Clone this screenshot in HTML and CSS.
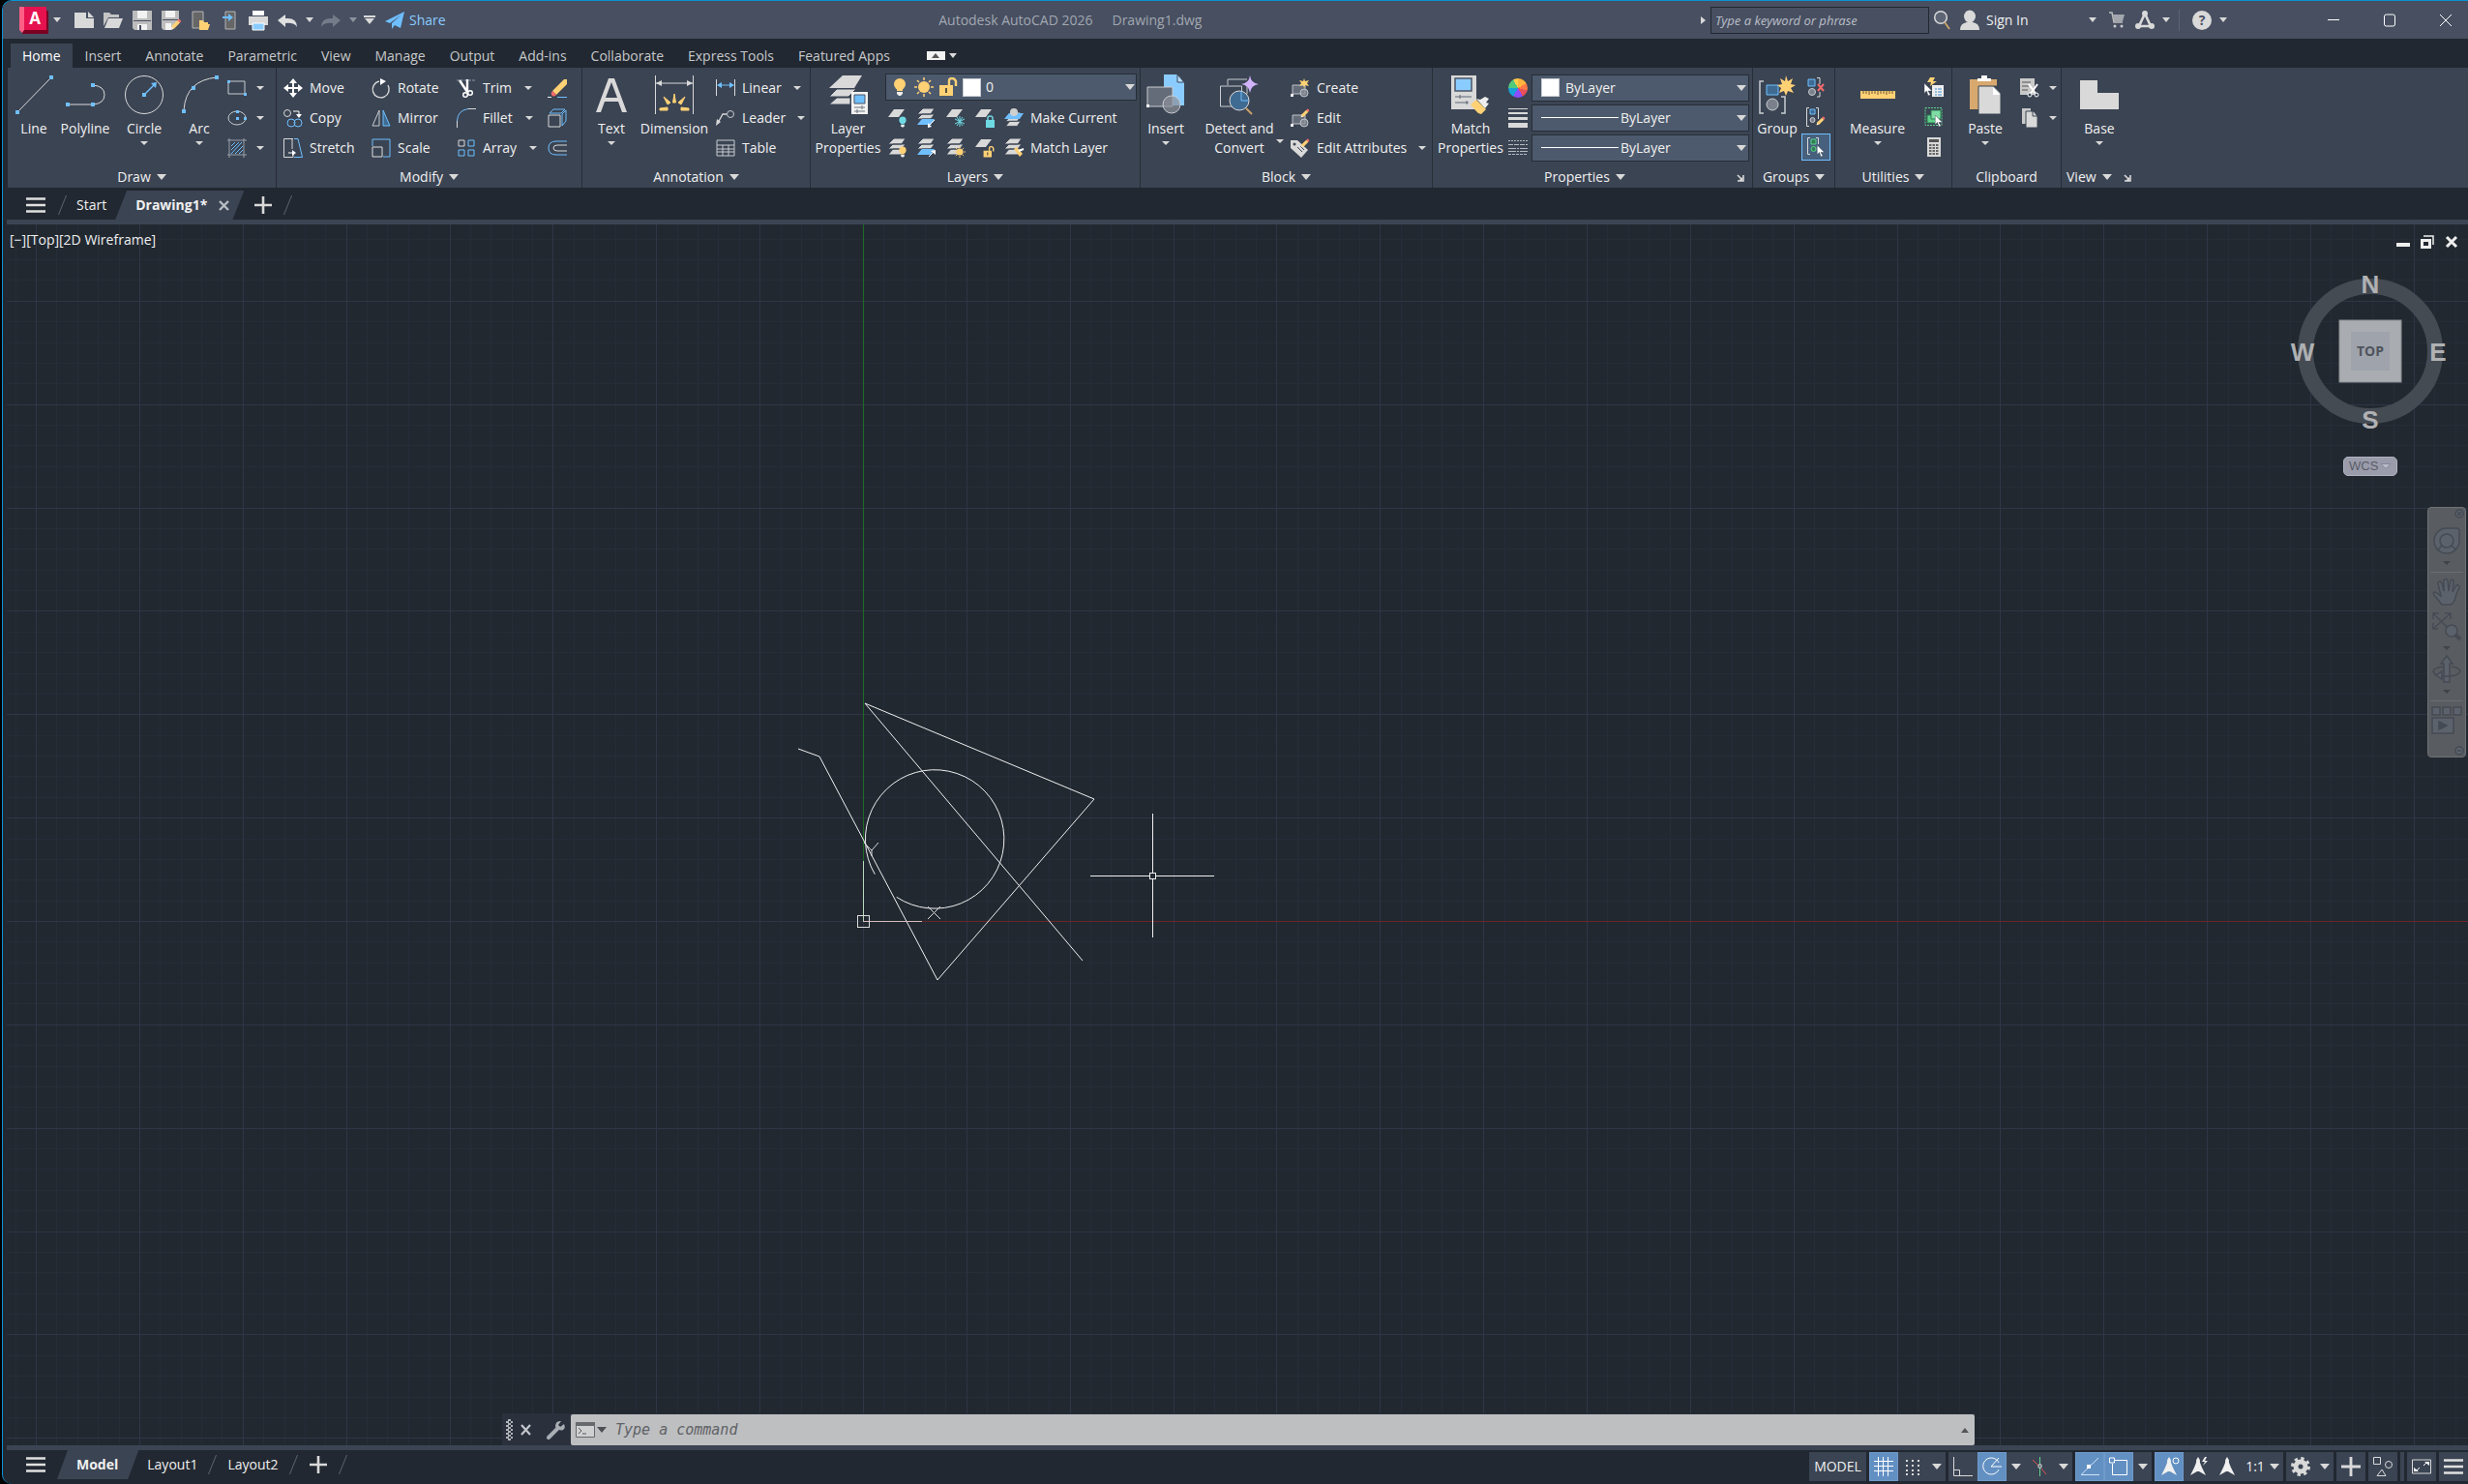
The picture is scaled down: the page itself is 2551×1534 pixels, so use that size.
FILE: index.html
```html
<!DOCTYPE html>
<html lang="en">
<head>
    <meta charset="UTF-8">
    <meta name="viewport" content="width=device-width, initial-scale=1.0">
    <title>Autodesk AutoCAD 2026 - Drawing1.dwg</title>
    <link rel="stylesheet" href="styles.css">
</head>
<body>
    <!-- shared icons -->
    <svg class="sprite" aria-hidden="true">
        <symbol id="layers" viewBox="0 0 20 20">
            <path d="M6 0h12l-4 6H0zM5 6h13l-4 5H0zM5 11h13l-4 6H0z" fill="#d9d9d9" stroke="#3b4453"/>
        </symbol>
        <symbol id="layer" viewBox="0 0 20 20"><path d="M6 1h11l-6 8H0z" fill="#d9d9d9"/></symbol>
        <symbol id="bulb" viewBox="0 0 20 20">
            <circle cx="10" cy="7" r="6" fill="currentColor"/><path d="M7 11h6v3H7z" fill="currentColor"/><path d="M7 15h6v2l-2 2H9l-2-2z" fill="#eee"/>
        </symbol>
        <symbol id="sun" viewBox="0 0 20 20">
            <circle cx="10" cy="10" r="6" fill="#ffd175"/><path d="M10 0v3M10 17v3M0 10h3M17 10h3M3 3l2 2M15 15l2 2M3 17l2-2M15 5l2-2" stroke="#ffd175" stroke-width="1.5"/>
        </symbol>
        <symbol id="unlock" viewBox="0 0 20 20">
            <path d="M1 8h14v11H1z" fill="#ffd175"/><path d="M11 8V4q0-3 3-3t4 3v5" fill="none" stroke="#ffd175" stroke-width="2.4"/><path d="M8 11v5" stroke="#5b5040" stroke-width="2"/>
        </symbol>
        <symbol id="pencil" viewBox="0 0 20 20">
            <path d="M3 17l1-5L13 3l4 4-9 9z" fill="#ffd175"/><path d="M13 3l2-2q3 0 4 4l-2 2z" fill="#f26b6b"/><path d="M3 17l1-4 3 3z" fill="#eee"/>
        </symbol>
        <symbol id="shapes" viewBox="0 0 20 20">
            <path d="M2 7h13v9H2z" fill="#656c79" stroke="#bfc3c9"/><circle cx="14" cy="15" r="4" fill="#8b9099" fill-opacity=".7" stroke="#bfc3c9"/><path d="M0 16h3v3H0z" fill="#eee"/>
        </symbol>
        <symbol id="cursor" viewBox="0 0 10 16"><path d="M0 0v13l3-3 2 6 3-1-3-5h5z" fill="#fff" stroke="#3b4453" stroke-width=".6"/></symbol>
        <symbol id="launch" viewBox="0 0 8 8"><path d="M1 1l4 4M7 1v6H1" fill="none" stroke="#d9d9d9" stroke-width="1.6"/><path d="M6 3v4H2z" fill="#d9d9d9"/></symbol>
        <symbol id="menu" viewBox="0 0 20 16"><path d="M0 1.5h20M0 8h20M0 14.5h20" stroke="#e0e0e0" stroke-width="2.4"/></symbol>
        <symbol id="plus" viewBox="0 0 18 18"><path d="M9 0v18M0 9h18" stroke="#d9d9d9" stroke-width="2.6"/></symbol>
        <symbol id="scale-a" viewBox="0 0 20 20"><path d="M10 0q2 2 2 6l2 5 4 8-7-4h-2l-7 4 4-8 2-5q0-4 2-6z" fill="currentColor"/></symbol>
    </svg>

    <div class="app">
        <header class="titlebar">
            <button class="logo" aria-label="Application menu">
                <svg width="31" height="28" viewBox="0 0 31 28"><path d="M3 4h27v24H3z" fill="#7a0022"/><path d="M0 0h5v24l-2 3-3-3z" fill="#ff5f86"/><path d="M5 0h23v24H5z" fill="#e5124f"/><text x="16" y="18" text-anchor="middle" class="logo-letter">A</text></svg>
                <i class="tri"></i>
            </button>
            <div class="quick">
                <button class="icon-btn" aria-label="New"><svg viewBox="0 0 20 20"><path d="M0 2h12v6h8v10H0z" fill="#d9d9d9"/><path d="M14 1l6 6h-6z" fill="#d9d9d9"/></svg></button>
                <button class="icon-btn" aria-label="Open"><svg viewBox="0 0 20 20"><path d="M0 2h6l2 2h8v3H5L0 16z" fill="#c4c4c4"/><path d="M5 8h15l-4 10H1z" fill="#d9d9d9"/></svg></button>
                <button class="icon-btn" aria-label="Save"><svg viewBox="0 0 20 20"><path d="M0 0h20v20H2l-2-2z" fill="#bdbdbd"/><path d="M5 0h10v8H5z" fill="#f2f2f2"/><path d="M5 14h10v6H5z" fill="#f2f2f2"/><path d="M7 15h2v5H7z" fill="#474f61"/><path d="M1 10.500h18" stroke="#474f61"/></svg></button>
                <button class="icon-btn" aria-label="Save as"><svg viewBox="0 0 20 20"><path d="M0 0h18v12l-7 8H2l-2-2z" fill="#bdbdbd"/><path d="M4 0h10v7H4z" fill="#f2f2f2"/><path d="M4 13h6v7H4z" fill="#f2f2f2"/><path d="M1 9.500h16" stroke="#474f61"/><use href="#pencil" x="8" y="8" width="13" height="13"/></svg></button>
                <button class="icon-btn" aria-label="Open from mobile"><svg viewBox="0 0 20 20"><path d="M2 1h11v17H2z" fill="#666" stroke="#b5b5b5"/><path d="M9 10h4l1 2h4v2h2l-2 6H9z" fill="#ffd175"/></svg></button>
                <button class="icon-btn" aria-label="Save to mobile"><svg viewBox="0 0 20 20"><path d="M6 1h10v18H6z" fill="#666" stroke="#b5b5b5"/><path d="M3 7h8" stroke="#6fbfff" stroke-width="2"/><path d="M9 3l5 4-5 4z" fill="#6fbfff"/></svg></button>
                <button class="icon-btn" aria-label="Plot"><svg viewBox="0 0 20 20"><path d="M4 0h12v5H4z" fill="#fff"/><path d="M0 6h20v9H0z" fill="#d9d9d9"/><path d="M4 13h12v7H4z" fill="#8accff" stroke="#fff"/></svg></button>
                <button class="icon-btn" aria-label="Undo"><svg viewBox="0 0 20 20"><path d="M0 10l8-6v4q12-1 12 9-3-5-12-4v4z" fill="#e0e0e0"/></svg></button>
                <button class="drop-btn" aria-label="Undo list"><i class="tri"></i></button>
                <button class="icon-btn" aria-label="Redo"><svg viewBox="0 0 20 20"><path d="M20 10l-8-6v4Q0 7 0 17q3-5 12-4v4z" fill="#757c89"/></svg></button>
                <button class="drop-btn" aria-label="Redo list"><i class="tri dim"></i></button>
                <button class="customize" aria-label="Customize toolbar"><i class="tri lg"></i></button>
            </div>
            <button class="share"><svg width="20" height="18" viewBox="0 0 20 18"><path d="M0 10L20 0l-4 17-6-3-3 4v-6L17 3 5 12z" fill="#6fbfff"/></svg>Share</button>
            <div class="doc-title"><span>Autodesk AutoCAD 2026</span><span>Drawing1.dwg</span></div>
            <button class="expand" aria-label="Expand search"><i class="tri right"></i></button>
            <input class="search" type="text" aria-label="Search" placeholder="Type a keyword or phrase">
            <button class="search-btn" aria-label="Search"><svg width="18" height="20" viewBox="0 0 18 20"><circle cx="8" cy="7" r="6.300" fill="#5d6575" stroke="#d9d9d9" stroke-width="1.500"/><path d="M12 12l5 7" stroke="#c9a06a" stroke-width="2"/></svg></button>
            <button class="account"><svg width="20" height="20" viewBox="0 0 20 20"><ellipse cx="10" cy="6" rx="6" ry="6.500" fill="#d9d9d9"/><path d="M0 20q0-7 7-8h6q7 1 7 8z" fill="#d9d9d9"/></svg><span>Sign In</span><i class="tri"></i></button>
            <button class="tool-btn" aria-label="Store"><svg width="16" height="17" viewBox="0 0 16 17"><path d="M0 1h3l2 10h9" fill="none" stroke="#bdbdbd" stroke-width="1.500"/><path d="M4 3h12l-2 7H5z" fill="#a2a6ad"/><circle cx="6" cy="15" r="1.500" fill="#ccc"/><circle cx="13" cy="15" r="1.500" fill="#ccc"/></svg></button>
            <button class="tool-btn" aria-label="Apps"><svg width="20" height="20" viewBox="0 0 20 20"><path d="M10 3L4 16h12z" fill="none" stroke="#d9d9d9" stroke-width="2.600"/><circle cx="10" cy="3" r="3" fill="#d9d9d9"/><circle cx="3" cy="16" r="3" fill="#d9d9d9"/><circle cx="17" cy="16" r="3" fill="#d9d9d9"/></svg></button>
            <button class="drop-btn" aria-label="Apps list"><i class="tri"></i></button>
            <span class="divider"></span>
            <button class="tool-btn" aria-label="Help"><svg width="20" height="20" viewBox="0 0 20 20"><circle cx="10" cy="10" r="10" fill="#d9d9d9"/><text x="10" y="15" text-anchor="middle" class="help-mark">?</text></svg></button>
            <button class="drop-btn" aria-label="Help list"><i class="tri"></i></button>
            <div class="window-btns">
                <button aria-label="Minimize"><svg viewBox="0 0 12 14"><path d="M0 6.500h12" stroke="#fff"/></svg></button>
                <button aria-label="Maximize"><svg viewBox="0 0 12 14"><rect x=".5" y="1" width="11" height="12" rx="2" fill="none" stroke="#fff"/></svg></button>
                <button aria-label="Close"><svg viewBox="0 0 12 14"><path d="M0 1l12 12M12 1L0 13" stroke="#fff"/></svg></button>
            </div>
        </header>

        <nav class="ribbon-tabs">
            <button class="active">Home</button>
            <button>Insert</button>
            <button>Annotate</button>
            <button>Parametric</button>
            <button>View</button>
            <button>Manage</button>
            <button>Output</button>
            <button>Add-ins</button>
            <button>Collaborate</button>
            <button>Express Tools</button>
            <button>Featured Apps</button>
            <button class="ribbon-toggle" aria-label="Minimize ribbon"><span class="pill"><i class="tri up"></i></span><i class="tri"></i></button>
        </nav>

        <div class="ribbon">
            <section class="panel draw">
                <div class="panel-body">
                    <button class="big"><svg viewBox="0 0 40 40"><path d="M3 38L38 2" stroke="#d9d9d9"/><path d="M1 36h4v4H1zM36 0h4v4h-4z" fill="#6fbfff"/></svg>Line</button>
                    <button class="big"><svg viewBox="0 0 40 40"><path d="M2 30h26q12-1 12-10T28 10" fill="none" stroke="#d9d9d9"/><path d="M0 28h4v4H0zM26 28h4v4h-4zM26 8h4v4h-4z" fill="#6fbfff"/></svg>Polyline</button>
                    <button class="big"><svg viewBox="0 0 40 40"><circle cx="20" cy="20" r="19.500" fill="none" stroke="#d9d9d9"/><path d="M20 20l10-10" stroke="#6fbfff" stroke-width="1.500"/><path d="M18 18h4v4h-4zM27 8l6-1-1 6z" fill="#6fbfff"/></svg>Circle<i class="tri sm"></i></button>
                    <button class="big"><svg viewBox="0 0 40 40"><path d="M4 36Q6 5 38 2" fill="none" stroke="#d9d9d9"/><path d="M2 35h4v4H2zM12 11h4v4h-4zM36 0h4v4h-4z" fill="#6fbfff"/></svg>Arc<i class="tri sm"></i></button>
                    <div class="stack flyouts">
                        <button aria-label="Rectangle"><svg viewBox="0 0 20 20"><path d="M1 3h17v13H1z" fill="none" stroke="#c9ccd1"/><path d="M0 2h3v3H0zM17 15h3v3h-3z" fill="#6fbfff"/></svg><i class="tri sm"></i></button>
                        <button aria-label="Ellipse"><svg viewBox="0 0 20 20"><ellipse cx="10" cy="10" rx="9" ry="7" fill="none" stroke="#c9ccd1"/><path d="M9 9h3v3H9zM9 2h3v3H9zM17 9h3v3h-3z" fill="#6fbfff"/></svg><i class="tri sm"></i></button>
                        <button aria-label="Hatch"><svg viewBox="0 0 20 20"><path d="M2 0v20M17 0v20M0 2h20M0 17h20" stroke="#9aa0aa"/><path d="M4 8l4-4M4 12l8-8M4 16L15 4M8 16l8-8M12 16l4-4" stroke="#6fbfff"/></svg><i class="tri sm"></i></button>
                    </div>
                </div>
                <button class="panel-title">Draw<i class="tri lg"></i></button>
            </section>

            <section class="panel modify">
                <div class="panel-body">
                    <div class="stack">
                        <button><svg viewBox="0 0 20 20"><path d="M10 2v16M2 10h16" stroke="#fff" stroke-width="2"/><path d="M10 0l4 5H6zM10 20l4-5H6zM0 10l5-4v8zM20 10l-5-4v8z" fill="#fff"/></svg>Move</button>
                        <button><svg viewBox="0 0 20 20"><circle cx="4" cy="5" r="3.500" fill="none" stroke="#d9d9d9"/><path d="M10 3h6v3" fill="none" stroke="#fff"/><path d="M13 6h6l-3 4z" fill="#fff"/><circle cx="8" cy="15" r="4" fill="none" stroke="#6fbfff"/><circle cx="15" cy="15" r="4" fill="none" stroke="#6fbfff"/></svg>Copy</button>
                        <button><svg viewBox="0 0 20 20"><path d="M10 .5H.5v19H10V16M9 1v10" fill="none" stroke="#d9d9d9"/><path d="M11 .5h4l4.500 19H11" fill="none" stroke="#6fbfff"/><path d="M5 15h5" stroke="#fff"/><path d="M9 12l4 3-4 3z" fill="#fff"/></svg>Stretch</button>
                    </div>
                    <div class="stack">
                        <button><svg viewBox="0 0 20 20"><path d="M8 3a8.500 8.500 0 1 0 9 4" fill="none" stroke="#d9d9d9" stroke-width="1.400"/><path d="M9 0l6 3-6 4z" fill="#fff"/></svg>Rotate</button>
                        <button><svg viewBox="0 0 20 20"><path d="M8 2v16H1z" fill="none" stroke="#c9ccd1"/><path d="M12 2v16h7z" fill="#3f6b92" stroke="#6fbfff"/></svg>Mirror</button>
                        <button><svg viewBox="0 0 20 20"><path d="M1 8V1h18v18h-7" fill="none" stroke="#6fbfff"/><path d="M1 9h10v10H1z" fill="none" stroke="#e0e0e0"/></svg>Scale</button>
                    </div>
                    <div class="stack">
                        <button><svg viewBox="0 0 20 20"><path d="M0 2h20" stroke="#8e96a3" stroke-dasharray="3 1"/><path d="M3 2l8 12M11 1v13" stroke="#fff" stroke-width="2.400"/><circle cx="9" cy="17" r="2.300" fill="none" stroke="#fff" stroke-width="1.500"/><circle cx="14" cy="15" r="2.300" fill="none" stroke="#fff" stroke-width="1.500"/></svg>Trim<i class="tri sm"></i></button>
                        <button><svg viewBox="0 0 20 20"><path d="M.5 20v-7" stroke="#d9d9d9"/><path d="M.5 13Q1 2 12 .5" fill="none" stroke="#6fbfff"/><path d="M12 .5h8" stroke="#d9d9d9"/></svg>Fillet<i class="tri sm"></i></button>
                        <button><svg viewBox="0 0 20 20"><path d="M2 2h6v6H2z" fill="none" stroke="#d9d9d9"/><path d="M12 2h6v6h-6zM2 12h6v6H2zM12 12h6v6h-6z" fill="none" stroke="#6fbfff"/></svg>Array<i class="tri sm"></i></button>
                    </div>
                    <div class="stack">
                        <button aria-label="Erase"><svg viewBox="0 0 20 20"><path d="M5 13L17 1h3v5L9 17z" fill="#ffd175"/><path d="M5 13l4 4q-3 3-5 0-1-2 1-4z" fill="#f26b6b"/><path d="M0 19.500h4" stroke="#eee"/><path d="M10 19.500h10" stroke="#6fbfff"/></svg></button>
                        <button aria-label="Explode"><svg viewBox="0 0 20 20"><path d="M1 7h12v12H1z" fill="none" stroke="#d9d9d9"/><path d="M2 5l4-4h12l-4 4zM15 6l4-4v11l-4 5z" fill="none" stroke="#6fbfff"/></svg></button>
                        <button aria-label="Offset"><svg viewBox="0 0 20 20"><path d="M20 3H9Q1 3 1 10t8 7h11" fill="none" stroke="#6fbfff"/><path d="M20 7H10q-4 0-4 3t4 3h10" fill="none" stroke="#d9d9d9"/></svg></button>
                    </div>
                </div>
                <button class="panel-title">Modify<i class="tri lg"></i></button>
            </section>

            <section class="panel annotation">
                <div class="panel-body">
                    <button class="big"><svg viewBox="0 0 40 40"><path d="M4 38L17 3h6l13 35h-5l-4-11H13L9 38zM14 23h12L20 7z" fill="#d9d9d9"/></svg>Text<i class="tri sm"></i></button>
                    <button class="big"><svg viewBox="0 0 40 40"><path d="M.5 0v40M39.500 0v40M1 8h38" stroke="#d9d9d9"/><path d="M1 8l6-3v6zM39 8l-6-3v6z" fill="#d9d9d9"/><path d="M20 19l1.500 9h-3zM9 22l7 6-3 2zM31 22l-7 6 3 2zM5 34l8-1v3H5zM35 34l-8-1v3h8z" fill="#ffd175" stroke="#ffd175"/></svg>Dimension</button>
                    <div class="stack">
                        <button><svg viewBox="0 0 20 20"><path d="M.5 1v17M19.500 1v17" stroke="#d9d9d9"/><path d="M2 7h16" stroke="#6fbfff"/><path d="M1 7l5-3v6zM19 7l-5-3v6z" fill="#6fbfff"/></svg>Linear<i class="tri sm"></i></button>
                        <button><svg viewBox="0 0 20 20"><path d="M2 15L7 6h4" fill="none" stroke="#d9d9d9" stroke-width="1.300"/><circle cx="15" cy="6" r="3.500" fill="none" stroke="#c9ccd1"/><path d="M0 18l1-7 4 3z" fill="#d9d9d9"/></svg>Leader<i class="tri sm"></i></button>
                        <button><svg viewBox="0 0 20 20"><path d="M1 2h18v16H1zM1 7h18M1 11h18M1 14h18M7 7v11M13 7v11" fill="none" stroke="#c9ccd1"/></svg>Table</button>
                    </div>
                </div>
                <button class="panel-title">Annotation<i class="tri lg"></i></button>
            </section>

            <section class="panel layer-panel">
                <div class="panel-body">
                    <button class="big"><svg viewBox="0 0 40 40"><path d="M14 0h20l-8 13H0z" fill="#d9d9d9"/><path d="M8 14h20l-8 8H0zM8 23h14v7H0z" fill="#d9d9d9" stroke="#3b4453"/><path d="M23 17h17v23H23z" fill="#f2f2f2"/><path d="M26 20h11v9H26z" fill="#6fbfff" stroke="#4c5463"/><path d="M26 33h11M26 37h11M34 31v4M29 35v4" stroke="#6d7480"/></svg>Layer<br>Properties</button>
                    <div class="layer-tools">
                        <label class="combo layer-combo">
                            <svg class="gold" viewBox="0 0 20 20"><use href="#bulb"/></svg>
                            <svg viewBox="0 0 20 20"><use href="#sun"/></svg>
                            <svg viewBox="0 0 20 20"><use href="#unlock"/></svg>
                            <span class="swatch"></span>
                            <select aria-label="Layer"><option>0</option></select>
                            <i class="tri lg"></i>
                        </label>
                        <div class="tool-row">
                            <button aria-label="Off"><svg class="teal" viewBox="0 0 20 20"><use href="#layer"/><use href="#bulb" x="9" y="8" width="12" height="12"/></svg></button>
                            <button aria-label="Isolate"><svg viewBox="0 0 20 20"><use href="#layers"/><path d="M5 11h13l-4 6H0z" fill="#6fbfff"/><path d="M18 12l-5 5" stroke="#fff"/><path d="M11 20v-5l4 4z" fill="#fff"/></svg></button>
                            <button aria-label="Freeze"><svg viewBox="0 0 20 20"><use href="#layer"/><path d="M14 8v11M9 11l10 5M9 16l10-5M11 9l6 9M17 9l-6 9" stroke="#6fd9e3"/></svg></button>
                            <button aria-label="Lock"><svg viewBox="0 0 20 20"><use href="#layer"/><path d="M11 12h9v8h-9z" fill="#6fd9e3"/><path d="M13 12v-2q0-2 2.500-2t2.500 2v2" fill="none" stroke="#6fd9e3" stroke-width="1.500"/></svg></button>
                            <button class="wide"><svg viewBox="0 0 20 20"><use href="#layers" y="4" height="17" width="20"/><path d="M5 5h15l-4 6H0z" fill="#6fbfff"/><circle cx="10" cy="4" r="4" fill="#d0d0d0"/></svg>Make Current</button>
                        </div>
                        <div class="tool-row">
                            <button aria-label="Turn all on"><svg class="gold" viewBox="0 0 20 20"><use href="#layers"/><use href="#bulb" x="9" y="8" width="12" height="12"/></svg></button>
                            <button aria-label="Unisolate"><svg viewBox="0 0 20 20"><use href="#layers"/><path d="M5 11h13l-4 6H0z" fill="#6fbfff"/><path d="M12 19l5-5" stroke="#fff"/><path d="M19 12v5l-5-4z" fill="#fff"/></svg></button>
                            <button aria-label="Thaw all"><svg viewBox="0 0 20 20"><use href="#layers"/><use href="#sun" x="8" y="8" width="12" height="12"/></svg></button>
                            <button aria-label="Unlock"><svg viewBox="0 0 20 20"><use href="#layer"/><use href="#unlock" x="8" y="8" width="12" height="12"/></svg></button>
                            <button class="wide"><svg viewBox="0 0 20 20"><use href="#layers"/><path d="M10 11l3-2 6 7-3 3z" fill="#ffd175"/><path d="M15 13l5-2" stroke="#fff" stroke-width="2"/></svg>Match Layer</button>
                        </div>
                    </div>
                </div>
                <button class="panel-title">Layers<i class="tri lg"></i></button>
            </section>

            <section class="panel block">
                <div class="panel-body">
                    <button class="big"><svg viewBox="0 0 40 40"><path d="M18-1h14l7 8v24H18z" fill="#8accff"/><path d="M32-1l7 8h-7z" fill="#b8dfff" stroke="#3b4453"/><path d="M1 12h26v20H1z" fill="#656c79" stroke="#c9ccd1"/><circle cx="26" cy="30" r="9" fill="#8b9099" fill-opacity=".7" stroke="#c9ccd1"/><path d="M0 30h3v3H0z" fill="#fff"/></svg>Insert<i class="tri sm"></i></button>
                    <button class="big detect"><svg viewBox="0 0 40 40"><path d="M8 10V4h20M.5 11h22v21H.5zM28 11v8" fill="none" stroke="#c9ccd1"/><circle cx="20" cy="26" r="10" fill="#3f6b92" stroke="#d9d9d9"/><path d="M22 16v10h8" fill="none" stroke="#6fbfff"/><path d="M27 34l6 6" stroke="#c9a06a" stroke-width="2"/><path d="M31 0q1 8 9 9-8 1-9 9-1-8-9-9 8-1 9-9z" fill="#d0b3fa"/></svg>Detect and<br>Convert<i class="tri sm"></i></button>
                    <div class="stack">
                        <button><svg viewBox="0 0 20 20"><use href="#shapes"/><path d="M14 0l1 3 4-1-2 3 2 3-4-1-1 3-1-3-4 1 2-3-2-3 4 1z" fill="#ffd175"/></svg>Create</button>
                        <button><svg viewBox="0 0 20 20"><use href="#shapes"/><use href="#pencil" x="9" width="11" height="11"/></svg>Edit</button>
                        <button><svg viewBox="0 0 20 20"><path d="M0 2h7l11 10-7 8L0 10z" fill="#d9d9d9"/><circle cx="4" cy="6" r="1.500" fill="#3b4453"/><path d="M7 9l5 5M10 8l4 4" stroke="#3b4453"/><use href="#pencil" x="9" width="11" height="11"/></svg>Edit Attributes<i class="tri sm"></i></button>
                    </div>
                </div>
                <button class="panel-title">Block<i class="tri lg"></i></button>
            </section>

            <section class="panel properties">
                <div class="panel-body">
                    <button class="big"><svg viewBox="0 0 40 40"><path d="M0 0h26v35H0z" fill="#d9d9d9"/><path d="M4 3h17v13H4z" fill="#8accff" stroke="#4c5463" stroke-width="1.500"/><path d="M4 22h17M4 28h14M9 20v4M16 26v4" stroke="#5f6673"/><path d="M20 30l6-5 10 10-5 5q-4-1-6-4z" fill="#ffd175"/><path d="M26 24l4 1 5-3 4 2-3 4 3 1-4 5z" fill="#eee"/></svg>Match<br>Properties</button>
                    <div class="prop-list">
                        <label><span class="wheel"></span><span class="combo"><span class="swatch"></span><select aria-label="Object color"><option>ByLayer</option></select><i class="tri lg"></i></span></label>
                        <label><svg viewBox="0 0 20 20"><path d="M0 .5h20" stroke="#d9d9d9"/><path d="M0 5h20" stroke="#d9d9d9" stroke-width="2"/><path d="M0 10.500h20" stroke="#d9d9d9" stroke-width="3"/><path d="M0 17.500h20" stroke="#d9d9d9" stroke-width="5"/></svg><span class="combo"><span class="line-sample"></span><select aria-label="Lineweight"><option>ByLayer</option></select><i class="tri lg"></i></span></label>
                        <label><svg viewBox="0 0 20 20"><path d="M0 2.500h20" stroke="#b5b9c0" stroke-dasharray="2 1"/><path d="M0 6.500h20" stroke="#b5b9c0" stroke-dasharray="5 1"/><path d="M0 10.500h20M0 13.500h20" stroke="#b5b9c0" stroke-dasharray="8 1 2 1"/><path d="M0 16.500h20" stroke="#b5b9c0" stroke-dasharray="3 1"/></svg><span class="combo"><span class="line-sample"></span><select aria-label="Linetype"><option>ByLayer</option></select><i class="tri lg"></i></span></label>
                    </div>
                </div>
                <div class="panel-foot"><button class="panel-title">Properties<i class="tri lg"></i></button><button class="launcher" aria-label="Properties palette"><svg width="8" height="8"><use href="#launch"/></svg></button></div>
            </section>

            <section class="panel groups">
                <div class="panel-body">
                    <button class="big"><svg viewBox="0 0 40 40"><path d="M6 6H2v33h4M24 22h4v17h-4" fill="none" stroke="#c9ccd1" stroke-width="1.500"/><path d="M9 10h12v10H9z" fill="#3f6b92" stroke="#6fbfff"/><circle cx="15" cy="30" r="6" fill="#7b818c" stroke="#c9ccd1"/><path d="M29 0l2 6 5-3-2 6 5 1-5 3 3 5-6-2-2 5-2-5-5 2 2-5-4-3 5-1-2-6 5 3z" fill="#ffd175"/></svg>Group</button>
                    <div class="stack squares">
                        <button aria-label="Ungroup"><svg viewBox="0 0 20 20"><path d="M2 2h7v7H2z" fill="#3f6b92" stroke="#6fbfff"/><circle cx="6" cy="15" r="3.500" fill="#7b818c" stroke="#c9ccd1"/><path d="M11 .5h3V7M14 15v5h-3" fill="none" stroke="#d9d9d9"/><path d="M12 7l6 7M18 7l-6 7" stroke="#f26b6b" stroke-width="2"/></svg></button>
                        <button aria-label="Group edit"><svg viewBox="0 0 20 20"><path d="M3 .5H.5v19H3M10 .5h2.500V12" fill="none" stroke="#d9d9d9"/><path d="M4 2h5v5H4z" fill="#3f6b92" stroke="#6fbfff"/><circle cx="6.500" cy="13" r="2.500" fill="#7b818c" stroke="#c9ccd1"/><use href="#pencil" x="9" y="9" width="11" height="11"/></svg></button>
                        <button class="on" aria-label="Group selection"><svg viewBox="0 0 20 20"><path d="M4 .5H1.500v17H4M10 .5h2.500V7" fill="none" stroke="#d9d9d9"/><path d="M5 2h5v5H5z" fill="#2f7d57" stroke="#5fd08a"/><circle cx="7.500" cy="12" r="2.500" fill="#2f7d57" stroke="#5fd08a"/><use href="#cursor" x="11" y="8" width="8" height="12"/></svg></button>
                    </div>
                </div>
                <button class="panel-title">Groups<i class="tri lg"></i></button>
            </section>

            <section class="panel utilities">
                <div class="panel-body">
                    <button class="big"><svg viewBox="0 0 40 40"><path d="M2 16h36v8H2z" fill="#ffd175"/><path d="M5 16v3M8 16v3M11 16v4M14 16v3M17 16v3M20 16v4M23 16v3M26 16v3M29 16v4M32 16v3M35 16v3" stroke="#6b5a35"/></svg>Measure<i class="tri sm"></i></button>
                    <div class="stack squares">
                        <button aria-label="Quick select"><svg viewBox="0 0 20 20"><path d="M8 8h12v12H8z" fill="#eee"/><path d="M11 12h2M14 12h4M11 15h2M14 15h4M11 18h2M14 18h4" stroke="#3f8fd0"/><path d="M6 0h5L9 4h4L6 9l1-4H3z" fill="#ffd175"/><use href="#cursor" x="0" y="6" width="8" height="13"/></svg></button>
                        <button aria-label="Select all"><svg viewBox="0 0 20 20"><path d="M1 .5h17v18H1z" fill="none" stroke="#5fd08a" stroke-dasharray="2 1"/><path d="M3 8h10v8H3z" fill="#5fd08a" stroke="#2f7d57"/><path d="M7 3h10v9H7z" fill="#7fdca3" stroke="#2f7d57"/><use href="#cursor" x="11" y="8" width="8" height="12"/></svg></button>
                        <button aria-label="Calculator"><svg viewBox="0 0 20 20"><path d="M3 0h14v20H3z" fill="#d9d9d9"/><path d="M5 2h10v3H5z" fill="#555"/><path d="M5 8h10M5 11h10M5 14h10M5 17h10" stroke="#666" stroke-width="2" stroke-dasharray="2.500 1"/></svg></button>
                    </div>
                </div>
                <button class="panel-title">Utilities<i class="tri lg"></i></button>
            </section>

            <section class="panel clipboard">
                <div class="panel-body">
                    <button class="big"><svg viewBox="0 0 40 40"><path d="M4 4h28v31H4z" fill="#d8a96f"/><path d="M12 6V3h4V0h6v3h4v3z" fill="#fff"/><path d="M13 11h23v29H13z" fill="#d9d9d9" stroke="#3b4453"/><path d="M28 11h9v9z" fill="#3b4453"/><path d="M28 12v8h7z" fill="#fff"/></svg>Paste<i class="tri sm"></i></button>
                    <div class="stack flyouts">
                        <button aria-label="Cut"><svg viewBox="0 0 20 20"><path d="M0 0h15v17H0z" fill="#c9c9c9"/><path d="M2 4h9M2 8h7M2 12h6" stroke="#555"/><path d="M9 6l8 11M18 6L10 17" stroke="#fff" stroke-width="2"/><circle cx="10" cy="17" r="2" fill="#3b4453" stroke="#fff"/><circle cx="17" cy="17" r="2" fill="#3b4453" stroke="#fff"/></svg><i class="tri sm"></i></button>
                        <button aria-label="Copy clip"><svg viewBox="0 0 20 20"><path d="M2 0h9v16H2z" fill="#c9c9c9"/><path d="M6 3h8l4 5v12H6z" fill="#d9d9d9" stroke="#3b4453"/><path d="M13 3v5h5" fill="none" stroke="#3b4453"/></svg><i class="tri sm"></i></button>
                    </div>
                </div>
                <span class="panel-title">Clipboard</span>
            </section>

            <section class="panel view">
                <div class="panel-body">
                    <button class="big"><svg viewBox="0 0 40 40"><path d="M0 5h18v13h22v17H0z" fill="#d9d9d9"/></svg>Base<i class="tri sm"></i></button>
                </div>
                <div class="panel-foot"><button class="panel-title">View<i class="tri lg"></i></button><button class="launcher" aria-label="View options"><svg width="8" height="8"><use href="#launch"/></svg></button></div>
            </section>
        </div>

        <nav class="file-tabs">
            <button class="menu-btn" aria-label="Drawing menu"><svg width="20" height="16"><use href="#menu"/></svg></button>
            <i class="slash"></i>
            <button class="file-tab">Start</button>
            <div class="file-tab current"><button>Drawing1*</button><button aria-label="Close tab"><svg width="11" height="11" viewBox="0 0 11 11"><path d="M1 1l9 9M10 1l-9 9" stroke="#b9bdc4" stroke-width="2.400"/></svg></button></div>
            <button class="add-btn" aria-label="New tab"><svg width="18" height="18"><use href="#plus"/></svg></button>
            <i class="slash"></i>
        </nav>

        <main class="viewport">
            <svg class="drawing" id="drawing">
                <path id="minor" class="grid-minor"/>
                <path id="major" class="grid-major"/>
                <!-- world origin -->
                <g transform="translate(885 720)">
                    <path d="M.5 0V-720" stroke="#1d6b25"/>
                    <path d="M0 .5H1700" stroke="#6b2529"/>
                    <g class="entity">
                        <path d="M-67-178l22 8L77 61l162-187L2-225 227 41"/>
                        <path d="M12.300-48.300A71.700 71.700 0 1 1 34.700-24.700"/>
                    </g>
                    <g class="ucs">
                        <path d="M.5 0V-62" stroke="#b9d8bc"/>
                        <path d="M0 .5H61" stroke="#d8bcbc"/>
                        <rect x="-5.500" y="-5.500" width="12" height="12"/>
                        <path d="M9-67v-6l-8-8M9-73l7-8M67-15l13 13M80-15L67-2"/>
                    </g>
                    <g class="crosshair" transform="translate(299 -47)">
                        <path d="M.5-64V-3M.5 4v60M-64 .5H-3M4 .5h60"/>
                        <rect x="-2.500" y="-2.500" width="6" height="6"/>
                    </g>
                </g>
            </svg>

            <div class="view-labels"><button>[−]</button><button>[Top]</button><button>[2D Wireframe]</button></div>

            <div class="view-btns">
                <button aria-label="Minimize drawing"><svg viewBox="0 0 14 14"><path d="M0 8h14v4H0z" fill="#eee"/></svg></button>
                <button aria-label="Restore drawing"><svg viewBox="0 0 14 14"><path d="M1.500 5.500h8v7h-8z" fill="none" stroke="#eee" stroke-width="3"/><path d="M3 1h10v9" fill="none" stroke="#eee" stroke-width="1.500"/></svg></button>
                <button aria-label="Close drawing"><svg viewBox="0 0 14 14"><path d="M2 2l10 10M12 2L2 12" stroke="#eee" stroke-width="3"/></svg></button>
            </div>

            <div class="viewcube">
                <svg width="164" height="164" viewBox="0 0 164 164">
                    <circle cx="82" cy="82" r="67" fill="none" stroke="#454b53" stroke-width="16"/>
                    <rect x="50" y="50" width="64" height="64" fill="#a9adb1" stroke="#8b8f92"/>
                    <rect x="62" y="62" width="40" height="40" fill="#9ea3ac"/>
                    <text x="82" y="87" class="cube-face">TOP</text>
                    <g class="compass"><text x="82" y="22">N</text><text x="82" y="162">S</text><text x="12" y="92">W</text><text x="152" y="92">E</text></g>
                </svg>
                <button class="wcs">WCS<svg width="12" height="6" viewBox="0 0 12 6"><path d="M1 .5h10L6 5.500z" fill="#b9bcc9" stroke="#85889a"/></svg></button>
            </div>

            <div class="navbar">
                <button class="nav-end" aria-label="Close navigation bar"><svg width="10" height="10" viewBox="0 0 10 10"><circle cx="5" cy="5" r="4"/><path d="M3 3l4 4M7 3L3 7"/></svg></button>
                <button aria-label="Steering wheel"><svg width="30" height="30" viewBox="0 0 30 30"><path d="M15 2h10q3 0 3 3v10A13 13 0 1 1 15 2z"/><circle cx="15" cy="15" r="7"/><path d="M10 20l-4 4M20 20l4 4"/></svg></button>
                <i class="tri sm"></i>
                <hr>
                <button aria-label="Pan"><svg width="30" height="30" viewBox="0 0 30 30"><path d="M10 28L2 18q-2-3 1-3l6 4L6 6q1-4 4 0l2 8V3q2-3 4 0l1 11 2-11q3-2 3 1l-1 11 4-7q3-1 3 2l-4 10q-1 6-5 8z"/></svg></button>
                <button aria-label="Zoom extents"><svg width="32" height="30" viewBox="0 0 32 30"><path d="M2 2l16 16M2 18L20 2M2 8V2h6M2 12v6h5M14 2h6v6"/><circle cx="21" cy="20" r="6"/><path d="M25 24l5 5" stroke-width="4"/></svg></button>
                <i class="tri sm"></i>
                <button aria-label="Orbit"><svg width="30" height="30" viewBox="0 0 30 30"><path d="M12 28V9H9l6-8 6 8h-3v19z"/><path d="M11 12Q2 13 1 17q2 6 14 5 12 0 14-5-1-4-9-5" fill="none"/><path d="M4 21l6-4v8z"/></svg></button>
                <i class="tri sm"></i>
                <hr>
                <button aria-label="ShowMotion"><svg width="32" height="30" viewBox="0 0 32 30"><path d="M1 1h8v8H1zM12 1h8v8h-8zM23 1h8v8h-8zM1 12h22v16H1z"/><path d="M8 16v8l8-4z" class="solid"/></svg></button>
                <button class="nav-end" aria-label="Navigation bar options"><svg width="10" height="10" viewBox="0 0 10 10"><circle cx="5" cy="5" r="4"/><path d="M3 5h4"/></svg></button>
            </div>

            <div class="command">
                <span class="grip"></span>
                <button aria-label="Close command line"><svg width="11" height="12" viewBox="0 0 11 12"><path d="M1 1l9 10M10 1L1 11" stroke="#c3c6cb" stroke-width="2.200"/></svg></button>
                <button class="wrench" aria-label="Customize"><svg width="20" height="20" viewBox="0 0 20 20"><path d="M2 18l10-10" stroke="#a9adb4" stroke-width="4" stroke-linecap="round"/><path d="M18 4l-4 3-2-2 3-4q-6-1-6 6 5 5 8 3 3-2 1-6z" fill="#a9adb4"/></svg></button>
                <div class="command-box">
                    <button aria-label="Recent commands"><svg width="20" height="16" viewBox="0 0 20 16"><path d="M.5.500h19v15H.5z" fill="#cfd0d1" stroke="#66696d"/><path d="M0 0h20v4H0z" fill="#66696d"/><path d="M3 6l3 3-3 3M7 12h4" fill="none" stroke="#55585c"/></svg><i class="tri lg"></i></button>
                    <input type="text" aria-label="Command" placeholder="Type a command">
                    <button aria-label="Command history"><i class="tri up"></i></button>
                </div>
            </div>
        </main>

        <footer class="status">
            <button class="menu-btn" aria-label="Layout menu"><svg width="20" height="16"><use href="#menu"/></svg></button>
            <button class="layout-tab current">Model</button>
            <button class="layout-tab">Layout1</button>
            <i class="slash"></i>
            <button class="layout-tab">Layout2</button>
            <i class="slash"></i>
            <button class="add-btn" aria-label="New layout"><svg width="18" height="18"><use href="#plus"/></svg></button>
            <i class="slash"></i>
            <div class="status-tools">
                <div class="group"><button class="model">MODEL</button></div>
                <div class="group">
                    <button class="on" aria-label="Grid"><svg viewBox="0 0 20 20"><path d="M4.500 0v20M9.500 0v20M14.500 0v20M0 4.500h20M0 9.500h20M0 14.500h20" stroke="#fff"/></svg></button>
                    <button aria-label="Snap"><svg viewBox="0 0 20 20"><path d="M3 4h16M3 9h16M3 14h16M3 18h16" stroke="#d9d9d9" stroke-width="2" stroke-dasharray="2 4"/></svg></button>
                    <button class="narrow" aria-label="Snap list"><i class="tri lg"></i></button>
                </div>
                <div class="group">
                    <button aria-label="Ortho"><svg viewBox="0 0 20 20"><path d="M.5 0v19.500H20M.5 13.500h6v6" fill="none" stroke="#d9d9d9"/></svg></button>
                    <button class="on" aria-label="Polar"><svg viewBox="0 0 20 20"><path d="M17 6a8.500 8.500 0 1 0 0 7M9 10L17 1M9 10h11" fill="none" stroke="#fff"/></svg></button>
                    <button class="narrow" aria-label="Polar list"><i class="tri lg"></i></button>
                    <button aria-label="Isometric"><svg viewBox="0 0 20 20"><path d="M3 3l6 6M12 12l5 6" stroke="#e05555"/><path d="M10.500 0v20" stroke="#5fd08a"/><path d="M9 8h3v3H9z" fill="#3b4453" stroke="#ddd"/></svg></button>
                    <button class="narrow" aria-label="Isometric list"><i class="tri lg"></i></button>
                </div>
                <div class="group">
                    <button class="on" aria-label="Object tracking"><svg viewBox="0 0 20 20"><path d="M19 1L1 18.500h19" fill="none" stroke="#cfe4fa"/><path d="M7 8h4v4H7z" fill="#fff"/></svg></button>
                    <button class="on" aria-label="Object snap"><svg viewBox="0 0 20 20"><path d="M6 3.500h12.500v15h-15V7" fill="none" stroke="#fff"/><path d="M.5 1h5v5h-5z" fill="none" stroke="#fff"/></svg></button>
                    <button class="narrow" aria-label="Object snap list"><i class="tri lg"></i></button>
                </div>
                <div class="group">
                    <button class="on" aria-label="Annotation visibility"><svg viewBox="0 0 20 20"><use href="#scale-a"/><circle cx="17" cy="4" r="3" fill="none" stroke="#fff"/></svg></button>
                    <button aria-label="Auto scale"><svg viewBox="0 0 20 20"><use href="#scale-a"/><path d="M17 0l-3 5h3l-2 4 5-5h-3l2-4z" fill="#eee"/></svg></button>
                    <button aria-label="Annotation scale"><svg viewBox="0 0 20 20"><use href="#scale-a"/></svg></button>
                    <button class="ratio">1:1<i class="tri lg"></i></button>
                </div>
                <div class="group">
                    <button aria-label="Workspace"><svg viewBox="0 0 20 20"><circle cx="10" cy="10" r="8" fill="none" stroke="#d9d9d9" stroke-width="4" stroke-dasharray="3.140 3.140"/><circle cx="10" cy="10" r="5" fill="none" stroke="#d9d9d9" stroke-width="5"/></svg></button>
                    <button class="narrow" aria-label="Workspace list"><i class="tri lg"></i></button>
                </div>
                <div class="group"><button aria-label="Annotation monitor"><svg viewBox="0 0 18 18"><use href="#plus"/></svg></button></div>
                <div class="group"><button aria-label="Isolate objects"><svg viewBox="0 0 20 20"><path d="M.5.500h7v7h-7zM9 13l4 6.500H4z" fill="none" stroke="#d9d9d9"/><circle cx="16" cy="8" r="3.500" fill="none" stroke="#d9d9d9"/></svg></button></div>
                <div class="group spacer"></div>
                <div class="group"><button aria-label="Clean screen"><svg viewBox="0 0 20 20"><path d="M.5 3h19v14H.5z" fill="none" stroke="#d9d9d9"/><path d="M12 9l4-4M8 11l-4 4" stroke="#fff"/><path d="M13 5h5v4zM2 15h5l-5-4z" fill="#fff"/></svg></button></div>
                <div class="group"><button aria-label="Customization"><svg viewBox="0 0 20 16"><use href="#menu"/></svg></button></div>
            </div>
        </footer>
    </div>

    <script src="grid.js"></script>
</body>
</html>
```
FILE: styles.css
```css
* {
    box-sizing: border-box;
}
body {
    margin: 0;
    background: #000;
    font-family: "Open Sans", "Noto Sans", sans-serif;
    font-size: 14px;
    line-height: 20px;
    color: #f0f0f0;
}
button, input, select {
    font: inherit;
    color: inherit;
    margin: 0;
    padding: 0;
    border: 0;
    background: none;
}
svg {
    flex: none;
    overflow: visible;
}
.sprite {
    position: absolute;
    width: 0;
    height: 0;
}
.app {
    display: flex;
    flex-direction: column;
    height: 100vh;
    margin-left: 2px;
    border-top: 1px solid #0a93d6;
    border-left: 1px solid #0a93d6;
    border-radius: 10px 0 0 10px;
    background: #222831;
    overflow: hidden;
}

/* small arrows */
.tri {
    flex: none;
    display: block;
    width: 0;
    height: 0;
    border: 4px solid transparent;
    border-top: 5px solid #d9d9d9;
    border-bottom: 0;
}
.tri.sm {
    border-top-width: 4px;
}
.tri.lg {
    border-width: 6px 5px 0;
}
.tri.dim {
    border-top-color: #8d939e;
}
.tri.up {
    border: 4px solid transparent;
    border-bottom: 5px solid #555;
    border-top: 0;
}
.tri.right {
    border: 4px solid transparent;
    border-left: 5px solid #d9d9d9;
    border-right: 0;
}

/* title bar */
.titlebar {
    display: flex;
    align-items: center;
    height: 39px;
    padding-left: 17px;
    background: #474f61;
}
.titlebar button {
    display: flex;
    align-items: center;
    justify-content: center;
}
.titlebar .logo {
    gap: 4px;
    width: 48px;
    justify-content: flex-start;
}
.logo-letter {
    font: bold 17px "Open Sans", sans-serif;
    fill: #fff;
}
.quick {
    display: flex;
    align-items: center;
}
.icon-btn {
    width: 30px;
}
.quick .icon-btn:first-child {
    margin-left: 4px;
}
.icon-btn svg {
    width: 20px;
    height: 20px;
}
.drop-btn {
    width: 15px;
    height: 20px;
}
.titlebar .customize {
    width: 12px;
    height: 10px;
    margin: 0 10px 0 4px;
    border-top: 2px solid #d9d9d9;
}
.titlebar .share {
    gap: 5px;
    color: #8accff;
}
.doc-title {
    flex: 1;
    display: flex;
    justify-content: center;
    gap: 20px;
    color: #a2a7b0;
}
.expand {
    width: 16px;
}
.search {
    width: 226px;
    height: 28px;
    padding: 0 4px;
    border: 1px solid #222831;
    font-family: "Noto Sans", sans-serif;
    font-size: 13px;
    font-style: italic;
}
.search::placeholder {
    color: #b5b9c1;
    opacity: 1;
}
.search-btn {
    width: 26px;
}
.titlebar .account {
    gap: 7px;
    width: 153px;
    padding: 0 6px;
    justify-content: flex-start;
}
.account .tri {
    margin-left: auto;
}
.tool-btn {
    width: 29px;
}
.divider {
    width: 1px;
    height: 22px;
    margin: 0 8px 0 6px;
    background: #5b6477;
}
.help-mark {
    font: bold 14px "Open Sans", sans-serif;
    fill: #474f61;
}
.window-btns {
    display: flex;
    gap: 12px;
    margin-left: 84px;
}
.window-btns button {
    width: 46px;
    height: 30px;
}
.window-btns svg {
    width: 12px;
    height: 14px;
}

/* ribbon tabs */
.ribbon-tabs {
    display: flex;
    align-items: flex-end;
    gap: 1px;
    height: 30px;
    padding-left: 8px;
}
.ribbon-tabs button {
    height: 25px;
    padding: 0 12px;
    color: #c6c8cb;
}
.ribbon-tabs .active {
    background: #3b4453;
    color: #fff;
}
.ribbon-tabs .ribbon-toggle {
    display: flex;
    align-items: center;
    gap: 4px;
    padding-left: 25px;
}
.pill {
    display: flex;
    align-items: center;
    justify-content: center;
    width: 19px;
    height: 9px;
    background: #f2f2f2;
}

/* ribbon */
.ribbon {
    display: flex;
    height: 124px;
    margin-left: 5px;
    background: #3b4453;
}
.panel {
    display: flex;
    flex-direction: column;
    border-right: 1px solid #262d37;
}
.panel-body {
    display: flex;
    height: 101px;
    padding-top: 5px;
}
.panel-title {
    display: flex;
    flex: 1;
    align-items: center;
    justify-content: center;
    gap: 6px;
    height: 23px;
}
.panel-foot {
    display: flex;
    align-items: center;
}
.launcher {
    width: 16px;
    height: 20px;
    text-align: left;
}
.big {
    display: flex;
    flex: none;
    flex-direction: column;
    align-items: center;
    padding-top: 3px;
    white-space: nowrap;
}
.big svg {
    width: 40px;
    height: 40px;
    margin-bottom: 5px;
}
.big .tri {
    margin-top: 3px;
}
.stack {
    display: grid;
    grid-auto-rows: 31px;
    align-content: start;
}
.stack button {
    display: flex;
    align-items: center;
    gap: 7px;
    white-space: nowrap;
}
.stack button .tri {
    margin-left: 5px;
}
.stack svg, .tool-row svg, .combo svg, .prop-list svg {
    width: 20px;
    height: 20px;
}
.flyouts button .tri {
    margin-left: 3px;
}

.draw {
    width: 278px;
}
.draw .panel-body {
    display: grid;
    grid-template-columns: 48px 58px 64px 50px 1fr;
    padding-left: 3px;
}
.draw .stack {
    padding-left: 4px;
}
.modify {
    width: 316px;
}
.modify .panel-body {
    display: grid;
    grid-template-columns: 91px 88px 94px 20px;
    padding-left: 7px;
}
.modify .tri.sm {
    margin-left: 6px;
}
.annotation {
    width: 236px;
}
.annotation .panel-body {
    display: grid;
    grid-template-columns: 44px 86px 1fr;
    padding-left: 8px;
}
.layer-panel {
    width: 341px;
}
.layer-panel .big {
    width: 77px;
}
.block {
    width: 302px;
}
.block .panel-body {
    display: grid;
    grid-template-columns: 52px 100px 1fr;
}
.block .stack {
    padding-left: 3px;
}
.big.detect {
    position: relative;
}
.detect .tri {
    position: absolute;
    right: 4px;
    top: 66px;
}
.properties {
    width: 331px;
}
.properties .big {
    width: 78px;
}
.groups {
    width: 85px;
}
.groups .big {
    width: 50px;
}
.utilities {
    width: 121px;
}
.utilities .big {
    width: 87px;
}
.clipboard {
    width: 113px;
}
.clipboard .big {
    width: 68px;
}
.clipboard .stack {
    padding-left: 2px;
}
.view {
    border-right: 0;
}
.view .big {
    width: 78px;
}
.view .panel-title {
    padding: 0 12px 0 5px;
}
.squares button {
    width: 30px;
    height: 28px;
    margin-top: 1px;
    justify-content: center;
}
.squares .on {
    border: 1px solid #6fbfff;
    background: #46607d;
}

/* combos */
.combo {
    position: relative;
    display: flex;
    align-items: center;
    width: 225px;
    height: 28px;
    padding: 0 2px 0 9px;
    border: 1px solid #262d37;
    background: #4d5a6d;
}
.combo select {
    flex: 1;
    appearance: none;
    outline: 0;
    padding-left: 6px;
}
.swatch {
    width: 19px;
    height: 19px;
    border: 1px solid #c9ccd1;
    background: #fff;
}
.line-sample {
    width: 80px;
    height: 1px;
    background: #fff;
}
.combo .line-sample + select {
    padding-left: 2px;
}
.layer-combo {
    width: 260px;
    margin-top: 1px;
    padding: 0 1px 0 4px;
    gap: 5px;
}
.layer-combo select {
    padding-left: 0;
}
.gold {
    color: #ffd175;
}
.teal {
    color: #6fd9e3;
}
.tool-row {
    display: flex;
    height: 31px;
    padding-left: 3px;
    gap: 10px;
}
.layer-combo + .tool-row {
    margin-top: 2px;
}
.tool-row button {
    display: flex;
    align-items: center;
    gap: 7px;
}
.prop-list label {
    display: flex;
    align-items: center;
    gap: 4px;
    height: 31px;
}
.wheel {
    width: 20px;
    height: 20px;
    border-radius: 50%;
    background: conic-gradient(#ffb53d 0 60deg, #ff7a45 0 105deg, #e8505b 0 150deg, #8a4dff 0 210deg, #18a3d8 0 270deg, #53c97a 0 330deg, #ffcf4a 0);
}

/* drawing tabs */
.file-tabs {
    display: flex;
    align-items: center;
    height: 38px;
    margin-left: 4px;
    padding-top: 3px;
    border-bottom: 5px solid #3b4453;
}
.menu-btn {
    width: 20px;
    height: 20px;
    margin: 0 13px 0 20px;
}
.menu-btn svg, .add-btn svg {
    display: block;
}
.slash {
    width: 1px;
    height: 20px;
    margin: 0 4px;
    background: #5a6473;
    transform: skewX(-22deg);
}
.file-tab {
    padding: 0 9px 0 10px;
}
.file-tab.current {
    display: flex;
    align-items: center;
    gap: 12px;
    height: 30px;
    padding: 0 15px 0 21px;
    background: #3b4453;
    clip-path: polygon(12px 0, 100% 0, calc(100% - 12px) 100%, 0 100%);
    font-weight: bold;
}
.current svg {
    display: block;
}
.add-btn {
    width: 18px;
    height: 18px;
    margin: 0 12px 0 11px;
}

/* drawing area */
.viewport {
    position: relative;
    flex: 1;
    min-height: 0;
    margin-left: 4px;
    background: #212830;
    overflow: hidden;
}
.drawing {
    position: absolute;
    width: 100%;
    height: 100%;
}
.drawing path, .drawing rect {
    fill: none;
}
.grid-minor {
    stroke: #262d38;
}
.grid-major {
    stroke: #2f3646;
}
.entity, .crosshair {
    stroke: #f0f0f0;
}
.ucs {
    stroke: #dcdcdc;
}
.view-labels {
    position: absolute;
    left: 3px;
    top: 6px;
    display: flex;
}
.view-btns {
    position: absolute;
    right: 10px;
    top: 11px;
    display: flex;
    gap: 11px;
}
.view-btns svg {
    display: block;
    width: 14px;
    height: 14px;
}
.viewcube {
    position: absolute;
    top: 49px;
    right: 19px;
    display: flex;
    flex-direction: column;
    align-items: center;
}
.compass {
    font: bold 26px "Liberation Sans", sans-serif;
    text-anchor: middle;
    fill: #b0b1b3;
}
.cube-face {
    font: bold 14px "Open Sans", sans-serif;
    text-anchor: middle;
    fill: #4f545c;
}
.wcs {
    display: flex;
    align-items: center;
    justify-content: space-between;
    width: 56px;
    height: 20px;
    margin-top: 27px;
    padding: 0 5px;
    border: 1px solid #b0b2c0;
    border-radius: 5px;
    background: #9a9cab;
    color: #5a5d68;
    font-family: "Liberation Sans", sans-serif;
    font-size: 13px;
}
.navbar {
    position: absolute;
    top: 292px;
    right: 2px;
    display: flex;
    flex-direction: column;
    align-items: center;
    width: 40px;
    height: 259px;
    border: 1px solid #6d7174;
    border-radius: 4px;
    background: #595d61;
}
.navbar svg {
    display: block;
    fill: #5c626c;
    stroke: #454a53;
    stroke-width: 1.5;
}
.navbar .solid {
    fill: #454a53;
}
.navbar button {
    margin-top: 5px;
}
.navbar .tri {
    margin-top: 6px;
    border-top-color: #3f444c;
}
.navbar hr {
    width: 34px;
    height: 1px;
    margin: 7px 0 0;
    border: 0;
    background: #6a6e72;
}
.navbar .nav-end {
    align-self: flex-end;
    margin: 1px 1px 3px;
}
.navbar .nav-end:last-child {
    margin: auto 1px 1px;
}

/* command line */
.command {
    position: absolute;
    left: 512px;
    bottom: 0;
    right: 510px;
    display: flex;
    align-items: center;
    gap: 8px;
    height: 33px;
    padding-left: 4px;
    background: #2a303c;
}
.grip {
    width: 7px;
    height: 22px;
    background: repeating-conic-gradient(#aeb2b8 0 25%, transparent 0 50%) 0 0 / 5px 4px;
}
.command svg {
    display: block;
}
.wrench {
    margin-left: 8px;
}
.command-box {
    flex: 1;
    display: flex;
    align-items: center;
    height: 32px;
    margin: 1px 0 0 -3px;
    padding: 0 6px 0 5px;
    border-radius: 2px;
    background: #bebfc1;
}
.command-box button {
    display: flex;
    align-items: center;
    gap: 2px;
}
.command-box .tri.lg {
    border-top-color: #4c4f54;
}
.command-box input {
    flex: 1;
    padding-left: 9px;
    font: italic 15px "DejaVu Sans Mono", monospace;
}
.command-box input::placeholder {
    color: #5f6266;
    opacity: 1;
}

/* status bar */
.status {
    display: flex;
    height: 40px;
    margin-left: 4px;
    border-top: 5px solid #3b4453;
}
.status .menu-btn {
    margin: 5px 12px 0 20px;
}
.status .slash {
    margin: 5px 6px 0;
}
.status .add-btn {
    margin: 6px 10px 0;
}
.layout-tab {
    height: 30px;
    padding: 0 9px;
}
.layout-tab.current {
    padding: 0 21px 0 20px;
    background: #3b4453;
    clip-path: polygon(11px 0, 100% 0, calc(100% - 11px) 100%, 0 100%);
    font-weight: bold;
}
.status-tools {
    display: flex;
    gap: 3px;
    margin: 2px 0 0 auto;
}
.group {
    display: flex;
    height: 30px;
    background: #3b4453;
}
.group button {
    display: flex;
    align-items: center;
    justify-content: center;
    width: 30px;
}
.group svg {
    width: 20px;
    height: 20px;
}
.group .on {
    background: #6390c2;
    border: 1px solid #6f9aca;
}
.group .narrow {
    width: 19px;
}
.group .model {
    width: 59px;
}
.group .ratio {
    gap: 5px;
    width: 43px;
}
.spacer {
    width: 4px;
}
```
FILE: grid.js
```js
// Draws the drafting grid around the world origin, one major line per five minor ones.
const svg = document.getElementById('drawing');
const origin = { x: 885, y: 720 };
const step = 106.86 / 5;

function drawGrid() {
    const w = svg.clientWidth;
    const h = svg.clientHeight;
    let minor = '';
    let major = '';

    for (let i = -Math.floor(origin.x / step); origin.x + i * step < w; i++) {
        const d = `M${Math.round(origin.x + i * step) + 0.5} 0V${h}`;
        if (i % 5 === 0) major += d; else minor += d;
    }
    for (let i = -Math.floor(origin.y / step); origin.y + i * step < h; i++) {
        const d = `M0 ${Math.round(origin.y + i * step) + 0.5}H${w}`;
        if (i % 5 === 0) major += d; else minor += d;
    }

    document.getElementById('minor').setAttribute('d', minor);
    document.getElementById('major').setAttribute('d', major);
}

window.addEventListener('resize', drawGrid);
drawGrid();
```
